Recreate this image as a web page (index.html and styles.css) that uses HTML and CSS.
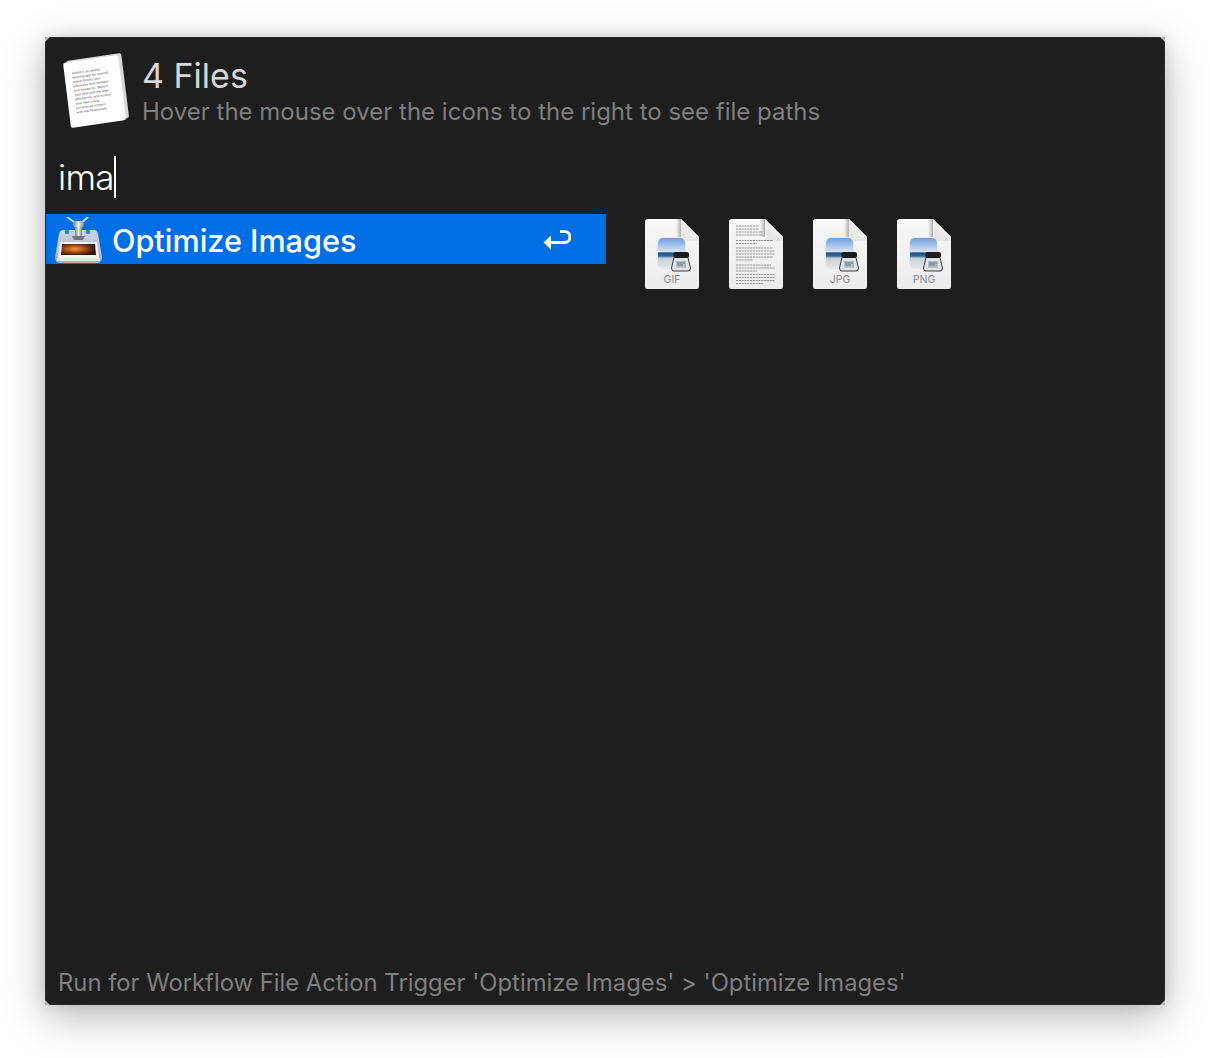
FILE: index.html
```html
<!DOCTYPE html>
<html lang="en">
<head>
<meta charset="utf-8">
<title>4 Files</title>
<link rel="stylesheet" href="styles.css">
</head>
<body>
<svg class="defs" width="0" height="0" aria-hidden="true">
  <defs>
    <linearGradient id="page" x1="0" y1="0" x2="0" y2="1"><stop offset="0" stop-color="#f7f7f7"/><stop offset="1" stop-color="#ececec"/></linearGradient>
    <linearGradient id="fold" x1="0" y1="1" x2="1" y2="0"><stop offset="0" stop-color="#e4e4e4"/><stop offset="1" stop-color="#fcfcfc"/></linearGradient>
    <linearGradient id="foldshade" x1="0" y1="0" x2="1" y2="0"><stop offset="0" stop-color="#000" stop-opacity="0"/><stop offset="1" stop-color="#000" stop-opacity=".28"/></linearGradient>
    <linearGradient id="sky" x1="0" y1="0" x2="0" y2="1"><stop offset="0" stop-color="#6f9de0"/><stop offset=".45" stop-color="#d6e2f2"/><stop offset=".5" stop-color="#1f4e85"/><stop offset=".6" stop-color="#3a6a94"/><stop offset=".68" stop-color="#c8d0d8"/><stop offset="1" stop-color="#e4e6e8"/></linearGradient>
    <linearGradient id="box" x1="0" y1="0" x2="0" y2="1"><stop offset="0" stop-color="#ccd5e4"/><stop offset="1" stop-color="#a4b0c4"/></linearGradient>
    <linearGradient id="steel" x1="0" y1="0" x2="1" y2="0"><stop offset="0" stop-color="#7a7f86"/><stop offset=".5" stop-color="#eceef0"/><stop offset="1" stop-color="#7f848b"/></linearGradient>
    <radialGradient id="photo" cx=".4" cy=".45" r=".6"><stop offset="0" stop-color="#f09a2c"/><stop offset=".5" stop-color="#a84a18"/><stop offset="1" stop-color="#2a1510"/></radialGradient>
    <symbol id="sheet" viewBox="0 0 54 70">
      <path d="M2.500 0H36L54 18V67.500A2.500 2.500 0 0 1 51.500 70H2.500A2.500 2.500 0 0 1 0 67.500V2.500A2.500 2.500 0 0 1 2.500 0Z" fill="url(#page)"/>
    </symbol>
    <symbol id="corner" viewBox="0 0 54 70">
      <path d="M31 0H36V18H31Z" fill="url(#foldshade)"/>
      <path d="M36 18H54V22H36Z" fill="#000" opacity=".05"/>
      <path d="M36 0L54 18H41Q36 18 36 13Z" fill="url(#fold)"/>
    </symbol>
    <symbol id="image-file" viewBox="0 0 54 70">
      <use href="#sheet" width="54" height="70"/>
      <use href="#corner" width="54" height="70"/>
      <rect x="12" y="18" width="29" height="32" rx="6" fill="#e6e6e6"/>
      <rect x="13" y="19" width="27" height="30" rx="5" fill="url(#sky)"/>
      <path d="M29 38.500H43L45.500 49Q45.500 52 43 52H29Q26.500 52 26.500 49Z" fill="#dfe4e8" stroke="#3c3c3e" stroke-width="1"/>
      <rect x="28.500" y="33" width="15.500" height="6" rx="2" fill="#1c1c1e"/>
      <path d="M31 42H41V49H31Z" fill="#b4bcc4"/>
      <path d="M32 44H40M32 46H38" stroke="#5c6670" stroke-width=".8"/>
    </symbol>
  </defs>
</svg>

<main class="window">
  <span class="notch notch-tl"></span>
  <span class="notch notch-tr"></span>
  <span class="notch notch-bl"></span>
  <span class="notch notch-br"></span>

  <header class="header">
    <svg class="doc-icon" viewBox="0 0 70 80" width="70" height="80" aria-hidden="true">
      <g transform="matrix(1.06 -.154 .118 .956 5 9)">
        <rect x="0" y="0" width="52" height="68" rx="2" fill="#d8d8d8"/>
      </g>
      <g transform="matrix(1.06 -.154 .118 .956 2 11)">
        <rect x="0" y="0" width="52" height="68" rx="2" fill="#ffffff"/>
        <text class="doc-text" x="7" y="13">Alfred is an award-</text>
        <text class="doc-text" x="7" y="17.550">winning app for macOS</text>
        <text class="doc-text" x="7" y="22.100">which boosts your</text>
        <text class="doc-text" x="7" y="26.650">efficiency with hotkeys</text>
        <text class="doc-text" x="7" y="31.200">and keywords. Search</text>
        <text class="doc-text" x="7" y="35.750">your Mac and the web</text>
        <text class="doc-text" x="7" y="40.300">effortlessly, and control</text>
        <text class="doc-text" x="7" y="44.850">your Mac using</text>
        <text class="doc-text" x="7" y="49.400">customised actions</text>
        <text class="doc-text" x="7" y="53.950">with the Powerpack.</text>
      </g>
    </svg>
    <div class="heading">
      <h1 class="title">4 Files</h1>
      <p class="subtitle">Hover the mouse over the icons to the right to see file paths</p>
    </div>
  </header>

  <div class="query"><span class="query-text">ima</span><span class="caret"></span></div>

  <div class="content">
    <div class="results">
      <div class="result">
        <svg class="app-icon" viewBox="0 0 47 47" width="47" height="47" aria-hidden="true">
          <path d="M12.500 0.500L22 7M32.500 0.500L25 7" stroke="#cfd3da" stroke-width="2" stroke-linecap="round"/>
          <path d="M8 13H39Q42 13 43 17L47 40Q47 46 42 46H5Q0 46 0 40L4 17Q5 13 8 13Z" fill="url(#box)"/>
          <circle cx="12" cy="15" r="2.300" fill="#2f7fd6"/>
          <circle cx="33" cy="15" r="2.300" fill="#2f7fd6"/>
          <rect x="18" y="4" width="11" height="7" rx="3.500" fill="url(#steel)"/>
          <rect x="20" y="10" width="7" height="10" fill="url(#steel)"/>
          <path d="M17 19H30L28 23H19Z" fill="#6d7580"/>
          <path d="M5 25H42L44 41H3Z" fill="#f2f2f2"/>
          <path d="M7 27H40L41 38H6Z" fill="url(#photo)"/>
          <path d="M2 41H45V44H2Z" fill="#e2e6eb"/>
        </svg>
        <span class="result-label">Optimize Images</span>
        <svg class="return-icon" viewBox="0 0 28 22" width="28" height="22" aria-hidden="true">
          <path d="M17 2.500H21.500A5.500 5.500 0 0 1 21.500 13.500H6" fill="none" stroke="#fff" stroke-width="3"/>
          <path d="M0.500 13.500L8 6.500V20.500Z" fill="#fff"/>
        </svg>
      </div>
    </div>
    <div class="files">
      <div class="file"><svg viewBox="0 0 54 70" width="54" height="70" aria-hidden="true"><use href="#image-file"/></svg><span class="file-ext">GIF</span></div>
      <div class="file">
        <svg viewBox="0 0 54 70" width="54" height="70" aria-hidden="true">
          <use href="#sheet"/>
          <g stroke="#8a8a8c" stroke-width=".9" stroke-dasharray="2.200 .6">
            <path d="M7 7H30"/><path d="M7 10H30"/><path d="M7 13H33"/><path d="M7 16H33"/>
            <path d="M7 21.500H44"/><path d="M7 24.500H28"/>
            <path d="M7 29H44"/><path d="M7 32H46"/><path d="M7 35H46"/><path d="M7 38H44"/><path d="M7 41H24"/>
            <path d="M7 46H42"/><path d="M7 49H46"/><path d="M7 52H28"/>
            <path d="M7 55.500H46"/><path d="M7 58.500H46"/><path d="M7 61.500H46"/><path d="M7 64.500H34"/>
          </g>
          <use href="#corner"/>
        </svg>
      </div>
      <div class="file"><svg viewBox="0 0 54 70" width="54" height="70" aria-hidden="true"><use href="#image-file"/></svg><span class="file-ext">JPG</span></div>
      <div class="file"><svg viewBox="0 0 54 70" width="54" height="70" aria-hidden="true"><use href="#image-file"/></svg><span class="file-ext">PNG</span></div>
    </div>
  </div>

  <footer class="footer">Run for Workflow File Action Trigger 'Optimize Images' &gt; 'Optimize Images'</footer>
</main>
</body>
</html>
```
FILE: styles.css
```css
* { box-sizing: border-box; }
html, body { margin: 0; height: 100%; }
body {
  background: #ffffff;
  padding: 37px 45px 53px;
  font-family: Inter, "Noto Sans", "Liberation Sans", sans-serif;
  overflow: hidden;
}
.defs { position: absolute; }
.window {
  position: relative;
  width: 1120px;
  height: 968px;
  background: #1e1e1e;
  border: 1px solid #2a2a2a;
  display: flex;
  flex-direction: column;
  box-shadow: 0 12px 40px rgba(0, 0, 0, .28), 0 0 14px rgba(0, 0, 0, .1);
}
.notch { position: absolute; width: 5px; height: 5px; background: #b5b5b5; }
.notch-tl { top: -1px; left: -1px; clip-path: polygon(0 0, 100% 0, 0 100%); }
.notch-tr { top: -1px; right: -1px; clip-path: polygon(0 0, 100% 0, 100% 100%); }
.notch-bl { bottom: -1px; left: -1px; clip-path: polygon(0 0, 100% 100%, 0 100%); }
.notch-br { bottom: -1px; right: -1px; clip-path: polygon(100% 0, 100% 100%, 0 100%); }

.header { display: flex; align-items: flex-start; gap: 11px; padding: 14px 0 0 15px; height: 107px; }
.doc-icon { flex: none; }
.doc-text { font-size: 3.050px; fill: #444444; }
.heading { padding-top: 3px; }
.title { margin: 0; font-size: 34px; line-height: 41px; font-weight: 400; color: #d8d8d8; }
.subtitle { margin: 1px 0 0; font-size: 24px; line-height: 30px; color: #7f7f7f; }

.query { display: flex; align-items: center; height: 69px; padding: 0 0 6px 12px; }
.query-text { font-size: 35px; font-weight: 300; letter-spacing: -.7px; color: #ffffff; }
.caret { width: 2px; height: 42px; background: #ffffff; }

.content { display: flex; flex: 1; }
.results { width: 560px; flex: none; }
.result { display: flex; align-items: center; height: 50px; background: #006fe6; padding-left: 9px; }
.app-icon { flex: none; margin: 2px 10px 0 0; }
.result-label { flex: 1; padding-top: 2px; font-size: 30.600px; font-weight: 450; color: #ffffff; }
.return-icon { flex: none; margin: 2px 35px 0 0; }

.files { display: flex; gap: 30px; padding: 5px 0 0 39px; }
.file { position: relative; width: 54px; height: 70px; }
.file svg { display: block; }
.file-ext { position: absolute; left: 0; right: 0; top: 54px; text-align: center; font-size: 10.500px; line-height: 13px; color: #8a8a8a; }

.footer { padding: 0 0 5px 12px; font-size: 23.800px; line-height: 32px; color: #7f7f7f; white-space: nowrap; }
```
